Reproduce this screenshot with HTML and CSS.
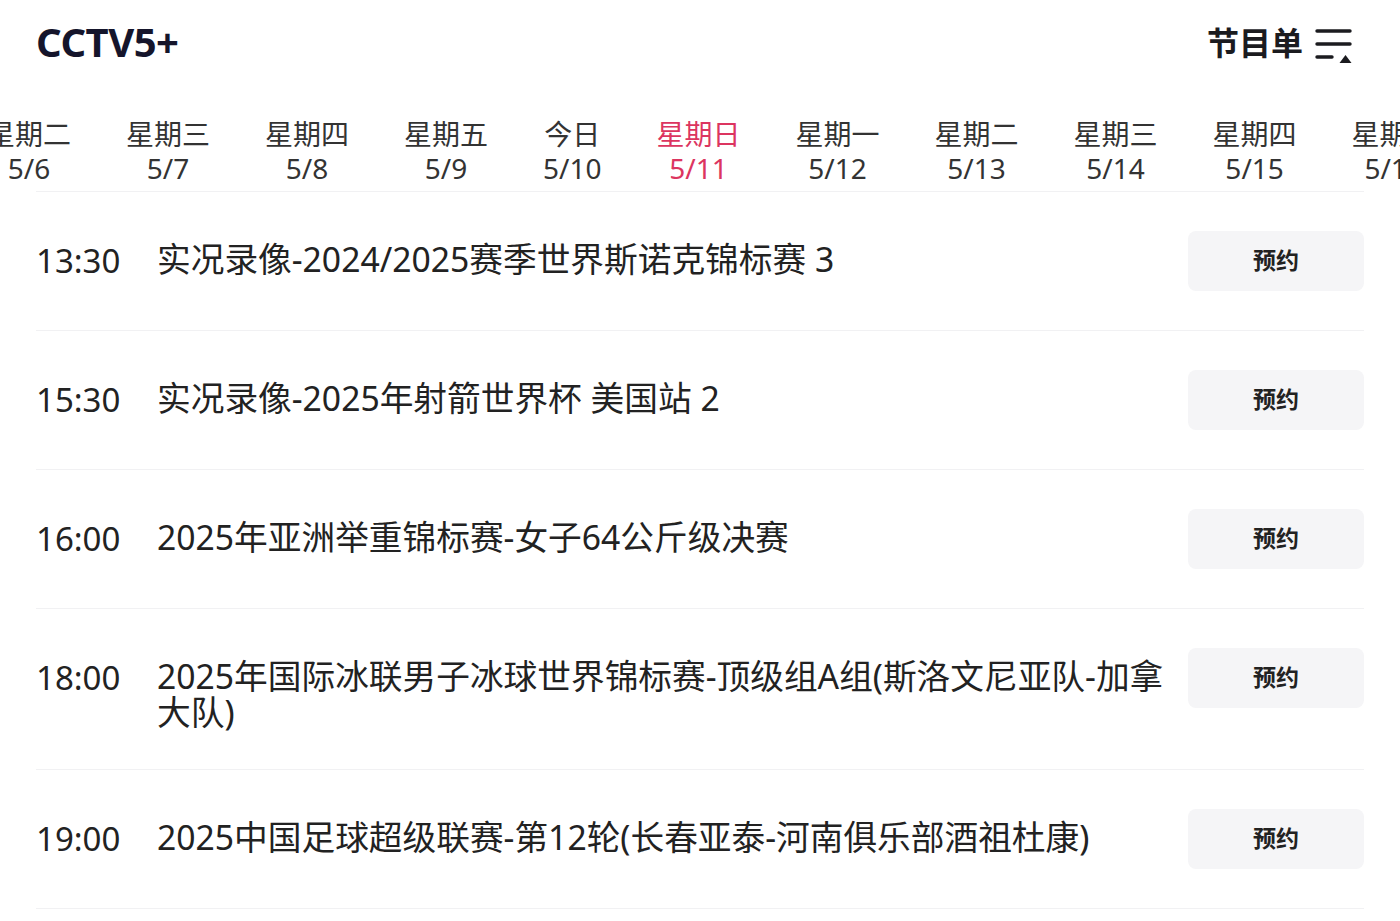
FILE: index.html
```html
<!doctype html>
<html>
    <head>
        <meta charset="utf-8">
        <link rel="stylesheet" href="styles.css">
    </head>
    <body>
        <div class="header">
            <h1 class="channel">CCTV5+</h1>
            <div class="menu">
                节目单
                <svg class="menu-icon" width="38" height="36" viewBox="0 0 38 36">
                    <line x1="2" y1="3" x2="35" y2="3" />
                    <line x1="2" y1="16" x2="35" y2="16" />
                    <line x1="2" y1="29" x2="17" y2="29" />
                    <polygon points="30.5,27 36.5,35 24.5,35" />
                </svg>
            </div>
        </div>

        <div class="days">
            <div class="day"><span>星期二</span><span>5/6</span></div>
            <div class="day"><span>星期三</span><span>5/7</span></div>
            <div class="day"><span>星期四</span><span>5/8</span></div>
            <div class="day"><span>星期五</span><span>5/9</span></div>
            <div class="day"><span>今日</span><span>5/10</span></div>
            <div class="day active"><span>星期日</span><span>5/11</span></div>
            <div class="day"><span>星期一</span><span>5/12</span></div>
            <div class="day"><span>星期二</span><span>5/13</span></div>
            <div class="day"><span>星期三</span><span>5/14</span></div>
            <div class="day"><span>星期四</span><span>5/15</span></div>
            <div class="day"><span>星期五</span><span>5/16</span></div>
        </div>

        <div class="schedule">
            <div class="row">
                <div class="time">13:30</div>
                <div class="title">实况录像-2024/2025赛季世界斯诺克锦标赛 3</div>
                <button class="book">预约</button>
            </div>
            <div class="row">
                <div class="time">15:30</div>
                <div class="title">实况录像-2025年射箭世界杯 美国站 2</div>
                <button class="book">预约</button>
            </div>
            <div class="row">
                <div class="time">16:00</div>
                <div class="title">2025年亚洲举重锦标赛-女子64公斤级决赛</div>
                <button class="book">预约</button>
            </div>
            <div class="row">
                <div class="time">18:00</div>
                <div class="title">2025年国际冰联男子冰球世界锦标赛-顶级组A组(斯洛文尼亚队-加拿大队)</div>
                <button class="book">预约</button>
            </div>
            <div class="row">
                <div class="time">19:00</div>
                <div class="title">2025中国足球超级联赛-第12轮(长春亚泰-河南俱乐部酒祖杜康)</div>
                <button class="book">预约</button>
            </div>
        </div>
    </body>
</html>
```

FILE: styles.css
```css
* {
    margin: 0;
    padding: 0;
    box-sizing: border-box;
}
body {
    background: #fff;
    color: #222;
    font-family: "Noto Sans", "Noto Sans CJK SC", sans-serif;
    overflow: hidden;
}
.header {
    display: flex;
    justify-content: space-between;
    align-items: center;
    height: 86px;
    padding: 0 47px 4px 36px;
}
.channel {
    font-size: 40px;
    font-weight: 700;
    color: #15152b;
    letter-spacing: -0.5px;
}
.menu {
    display: flex;
    align-items: center;
    gap: 12px;
    font-size: 32px;
    font-weight: 700;
    color: #1b1b1f;
}
.menu-icon {
    margin-top: 10px;
}
.menu-icon line {
    stroke: #1b1b1f;
    stroke-width: 3.4;
    stroke-linecap: round;
}
.menu-icon polygon {
    fill: #1b1b1f;
}
.days {
    display: flex;
    gap: 55px;
    margin-left: -13px;
    height: 105px;
    padding-top: 31px;
    white-space: nowrap;
}
.day {
    display: flex;
    flex-direction: column;
    align-items: center;
    flex: none;
    font-size: 28px;
    line-height: 34px;
    color: #333;
}
.day.active {
    color: #dc3560;
}
.schedule {
    margin: 0 36px;
    border-top: 1px solid #f1f1f3;
}
.row {
    display: flex;
    align-items: flex-start;
    padding: 39px 0;
    border-bottom: 1px solid #f1f1f3;
}
.time {
    width: 121px;
    flex: none;
    margin-top: 12px;
    font-size: 33px;
    line-height: 36px;
    color: #222;
}
.title {
    flex: 1;
    margin: 10px 22px 0 0;
    font-size: 33.7px;
    line-height: 36px;
    color: #222;
}
.book {
    display: flex;
    align-items: center;
    justify-content: center;
    flex: none;
    width: 176px;
    height: 60px;
    padding-bottom: 4px;
    border: none;
    border-radius: 8px;
    background: #f5f5f7;
    font-family: "Noto Sans CJK SC", sans-serif;
    font-size: 23px;
    line-height: 1;
    font-weight: 700;
    color: #222;
}
```
